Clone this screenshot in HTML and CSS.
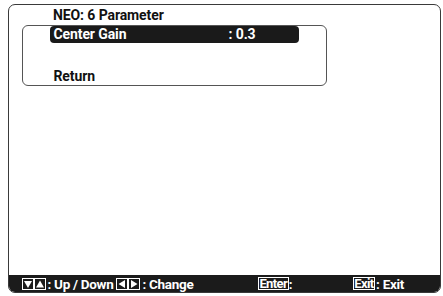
FILE: index.html
```html
<!DOCTYPE html>
<html>
<head>
<meta charset="utf-8">
<link rel="stylesheet" href="styles.css">
</head>
<body>
<div class="frame">
  <div class="title">NEO: 6 Parameter</div>
  <div class="menu">
    <div class="row selected"><span class="label">Center Gain</span><span class="value">: 0.3</span></div>
    <div class="row blank"></div>
    <div class="row"><span class="label">Return</span></div>
  </div>
  <div class="bar">
    <span class="keys">
      <svg class="key" width="12" height="12" viewBox="0 0 12 12"><rect x="0.5" y="0.5" width="11" height="11" fill="none" stroke="#fff"/><polygon points="2,3 10,3 6,10" fill="#fff"/></svg><svg class="key" width="12" height="12" viewBox="0 0 12 12"><rect x="0.5" y="0.5" width="11" height="11" fill="none" stroke="#fff"/><polygon points="2,9.5 10,9.5 6,2.5" fill="#fff"/></svg>
    </span>
    <span class="txt">: Up / Down</span>
    <span class="keys k2">
      <svg class="key" width="12" height="12" viewBox="0 0 12 12"><rect x="0.5" y="0.5" width="11" height="11" fill="none" stroke="#fff"/><polygon points="9,2 9,10 2.5,6" fill="#fff"/></svg><svg class="key" width="12" height="12" viewBox="0 0 12 12"><rect x="0.5" y="0.5" width="11" height="11" fill="none" stroke="#fff"/><polygon points="3,2 3,10 9.5,6" fill="#fff"/></svg>
    </span>
    <span class="txt">: Change</span>
    <span class="boxed enter">Enter</span><span class="txt">:</span>
    <span class="boxed exit">Exit</span><span class="txt">: Exit</span>
  </div>
</div>
</body>
</html>
```
FILE: styles.css
```css
html, body {
  margin: 0;
  padding: 0;
  background: #fff;
}
body {
  width: 443px;
  height: 296px;
  overflow: hidden;
  font-family: Roboto, "Liberation Sans", sans-serif;
  font-weight: bold;
  font-size: 14px;
  color: #111;
}
.frame {
  box-sizing: border-box;
  margin: 4px 2px 0 8px;
  width: 433px;
  height: 289px;
  border: 1.5px solid #3a3a3a;
  border-radius: 7px;
  overflow: hidden;
  display: flex;
  flex-direction: column;
}
.title {
  height: 20px;
  line-height: 14px;
  padding: 3px 0 0 44px;
  box-sizing: border-box;
  letter-spacing: -0.1px;
}
.menu {
  box-sizing: border-box;
  margin-left: 12.5px;
  width: 305px;
  height: 61px;
  border: 1px solid #555;
  border-radius: 6px;
}
.row {
  height: 17px;
  line-height: 17px;
  display: flex;
  margin-left: 27px;
  width: 249px;
  padding-left: 4px;
  box-sizing: border-box;
  letter-spacing: -0.1px;
}
.row.blank {
  height: 25px;
}
.row.selected {
  background: #1a1a1a;
  color: #fff;
  border-radius: 4px;
}
.label {
  width: 175px;
}
.bar {
  margin-top: auto;
  height: 17px;
  background: #1b1b1b;
  color: #fff;
  display: flex;
  align-items: center;
  padding-left: 12.5px;
  font-size: 13.5px;
  letter-spacing: -0.3px;
}
.keys {
  display: flex;
  gap: 0;
  margin-right: 2px;
}
.k2 {
  margin-left: 3px;
}
.key {
  display: block;
}
.boxed {
  border: 1px solid #fff;
  line-height: 11px;
  font-size: 13px;
  letter-spacing: -0.6px;
  padding: 0 0.5px 0 0;
}
.enter {
  margin-left: 65px;
}
.exit {
  margin-left: 61px;
  margin-right: 1px;
}
```
